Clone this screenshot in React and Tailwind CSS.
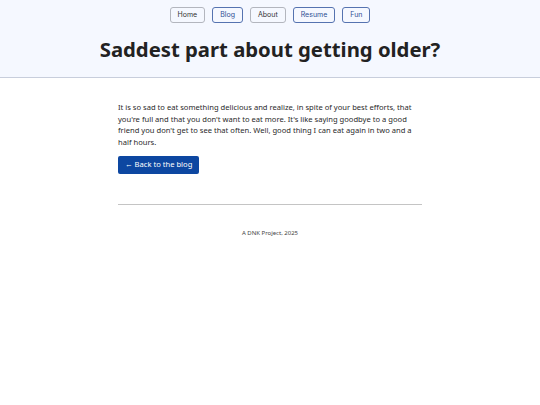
const NAV = [
  { label: "Home", active: false },
  { label: "Blog", active: true },
  { label: "About", active: false },
  { label: "Resume", active: true },
  { label: "Fun", active: true },
]

export default function App() {
  return (
    <div className="min-h-[405px] bg-white font-['Noto_Sans',sans-serif] text-[#222]">
      <header className="h-[78px] border-b border-[#c8cedc] bg-[#f5f8ff]">
        <nav className="flex justify-center gap-[7px] pt-[7px] font-['Inter',sans-serif]">
          {NAV.map((item) => (
            <a
              key={item.label}
              href="#"
              className={
                "flex h-[16px] items-center rounded-[3px] border px-[7px] text-[7px] " +
                (item.active
                  ? "border-[#5573b0] text-[#2f4f94]"
                  : "border-[#b3b6be] text-[#333]")
              }
            >
              {item.label}
            </a>
          ))}
        </nav>
        <h1 className="mt-[12px] text-center text-[20.3px] font-bold leading-[28px] text-[#222]">
          Saddest part about getting older?
        </h1>
      </header>

      <main className="mx-auto w-[304px] pt-[24px]">
        <p className="text-[7.6px] leading-[11.7px] text-[#2a2a2a]">
          It is so sad to eat something delicious and realize, in spite of your best efforts, that
          you're full and that you don't want to eat more. It's like saying goodbye to a good
          friend you don't get to see that often. Well, good thing I can eat again in two and a
          half hours.
        </p>
        <a
          href="#"
          className="mt-[7px] inline-flex h-[18px] items-center rounded-[2px] bg-[#0d47a1] px-[7px] text-[7.6px] text-white"
        >
          ← Back to the blog
        </a>
        <div className="mt-[30px] h-px bg-[#c4c4c4]" />
        <footer className="pt-[24px] text-center text-[6px] text-[#444]">
          A DNK Project, 2025
        </footer>
      </main>
    </div>
  )
}
